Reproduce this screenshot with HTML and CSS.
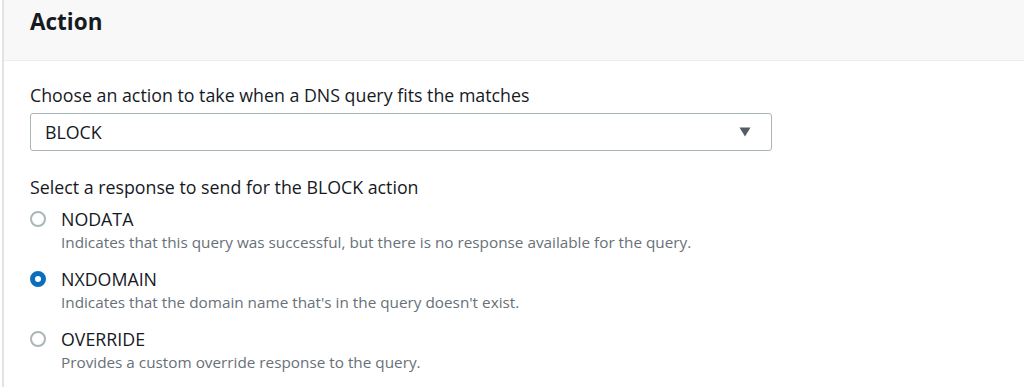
FILE: index.html
```html
<!DOCTYPE html>
<html>
<head>
<meta charset="utf-8">
<link rel="stylesheet" href="styles.css">
</head>
<body>
<div class="panel">
  <div class="panel-header">
    <h2 class="title">Action</h2>
  </div>
  <div class="panel-body">
    <div class="field first">
      <div class="label">Choose an action to take when a DNS query fits the matches</div>
      <div class="select">
        <span class="select-value">BLOCK</span>
        <svg class="caret" width="12" height="10" viewBox="0 0 12 10"><path d="M0.5 0.5 H11.5 L6 9.5 Z" fill="#545b64"/></svg>
      </div>
    </div>
    <div class="field">
      <div class="label">Select a response to send for the BLOCK action</div>
      <div class="radio-group">
        <div class="radio">
          <span class="dot"></span>
          <div class="radio-text">
            <div class="radio-label">NODATA</div>
            <div class="radio-desc">Indicates that this query was successful, but there is no response available for the query.</div>
          </div>
        </div>
        <div class="radio">
          <span class="dot checked"></span>
          <div class="radio-text">
            <div class="radio-label">NXDOMAIN</div>
            <div class="radio-desc">Indicates that the domain name that's in the query doesn't exist.</div>
          </div>
        </div>
        <div class="radio">
          <span class="dot"></span>
          <div class="radio-text">
            <div class="radio-label">OVERRIDE</div>
            <div class="radio-desc">Provides a custom override response to the query.</div>
          </div>
        </div>
      </div>
    </div>
  </div>
</div>
</body>
</html>
```

FILE: styles.css
```css
* { box-sizing: border-box; }
html, body { margin: 0; padding: 0; background: #ffffff; }
body {
  font-family: "Open Sans", "Noto Sans", sans-serif;
  color: #16191f;
}
.panel {
  margin-left: 2px;
  border-left: 2px solid #e1e4e4;
  min-height: 387px;
}
.panel-header {
  background: #f8f8f8;
  height: 61px;
  border-bottom: 1px solid #eaeded;
  padding: 0 0 0 26px;
}
.title {
  margin: 0;
  font-size: 22.5px;
  font-weight: 700;
  line-height: 28px;
  padding-top: 8px;
  color: #16191f;
}
.panel-body {
  padding: 22px 26px 0 26px;
}
.field.first { margin-bottom: 24px; }
.label {
  font-size: 17.8px;
  line-height: 24px;
  color: #16191f;
  margin-bottom: 6px;
}
.field:not(.first) .label { margin-bottom: 8px; }
.select {
  width: 742px;
  height: 38px;
  border: 1px solid #aab7b8;
  border-radius: 3px;
  display: flex;
  align-items: center;
  justify-content: space-between;
  padding: 0 20px 0 14px;
  font-size: 17.8px;
}
.select-value { color: #16191f; }
.caret { display: block; }
.radio-group { display: flex; flex-direction: column; gap: 14px; }
.radio { display: flex; align-items: flex-start; gap: 15px; }
.dot {
  flex: none;
  width: 16px;
  height: 16px;
  border-radius: 50%;
  border: 2px solid #aab7b8;
  margin-top: 4px;
  background: #fff;
}
.dot.checked {
  border: 5px solid #0a6ebd;
}
.radio-label {
  font-size: 17.8px;
  line-height: 24px;
  color: #16191f;
}
.radio-desc {
  font-size: 15.3px;
  line-height: 22px;
  color: #687078;
}
```
